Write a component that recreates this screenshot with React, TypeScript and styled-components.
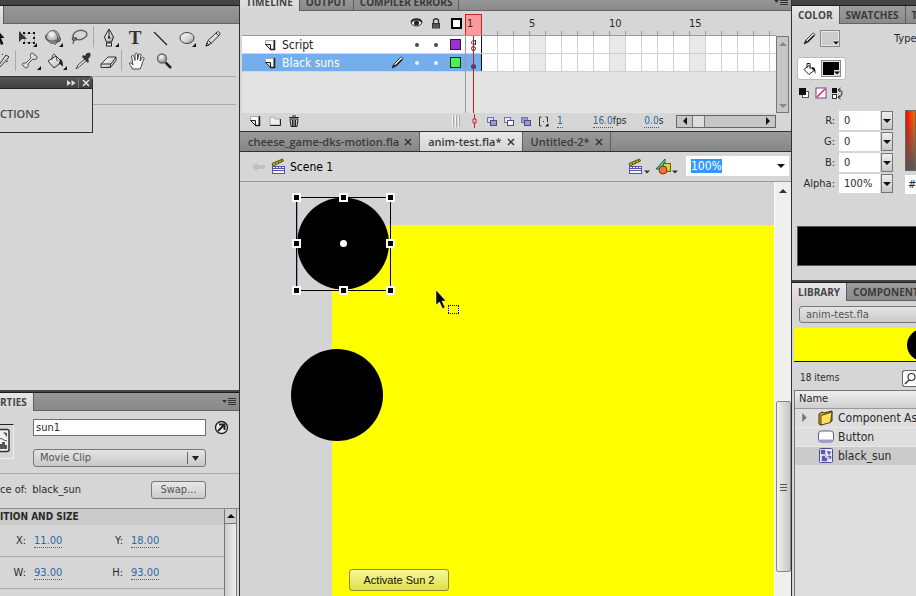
import React, { useEffect, useRef } from "react";
import styled, { createGlobalStyle, css } from "styled-components";

const tabFont = `"Open Sans", "Noto Sans", sans-serif`;
const uiFont = `"DejaVu Sans Condensed", "Noto Sans", sans-serif`;
const face = "#d6d6d6";
const dark = "#303030";

const GlobalStyle = createGlobalStyle`
  *, *::before, *::after { box-sizing: border-box; }
  html, body { margin: 0; height: 100%; overflow: hidden; background: ${face}; }
  body { font: 11px/16px ${uiFont}; color: #2a2a2a; }
  button, input, select { font: inherit; color: inherit; margin: 0; padding: 0; border: 0; border-radius: 0; background: none; outline: none; }
  button { display: inline-flex; align-items: center; justify-content: center; flex: none; }
  svg { display: block; flex: none; }
`;

/* ---------- shell ---------- */

const Shell = styled.div`
  display: grid;
  grid-template-columns: 240px minmax(0, 1fr) 125px;
  height: 100vh;
  overflow: hidden;
  background: ${face};
`;

const LeftDock = styled.aside`
  display: flex;
  flex-direction: column;
  min-height: 0;
  overflow: hidden;
  border-right: 1px solid ${dark};
`;

const Center = styled.main`
  display: flex;
  flex-direction: column;
  min-width: 0;
  min-height: 0;
`;

const RightDock = styled.aside`
  display: flex;
  flex-direction: column;
  min-width: 0;
  min-height: 0;
  overflow: hidden;
  border-left: 1px solid ${dark};
`;

const TitleBar = styled.div<{ $thin?: boolean }>`
  flex: none;
  height: ${(p) => (p.$thin ? 3 : 6)}px;
  background: #444;
  border-bottom: 1px solid #1c1c1c;
`;

const TabStrip = styled.div<{ $short?: boolean }>`
  display: flex;
  flex: none;
  align-items: flex-end;
  height: ${(p) => (p.$short ? 11 : 18)}px;
  overflow: hidden;
  background: linear-gradient(#979797, #888);
  box-shadow: inset 0 -1px #636363;
`;

const PanelTab = styled.button<{ $active?: boolean; $flush?: boolean }>`
  height: 18px;
  padding: 0 6px;
  ${(p) => p.$flush && css`padding: 0 6px 0 0;`}
  font: 700 10px/18px ${tabFont};
  white-space: nowrap;
  color: ${(p) => (p.$active ? "#444" : "#3a3a3a")};
  background: ${(p) => (p.$active ? `linear-gradient(#e6e6e6, ${face})` : "linear-gradient(#9c9c9c, #8a8a8a)")};
  border-right: 1px solid #5c5c5c;
  border-bottom: ${(p) => (p.$active ? "0" : "1px solid #636363")};
`;

const TabEdge = styled.button`
  width: 4px;
  height: 18px;
  background: linear-gradient(#e6e6e6, ${face});
  border-right: 1px solid #5c5c5c;
`;

const StripMenu = styled.button`
  margin-left: auto;
  width: 20px;
  height: 18px;
`;

/* ---------- tools ---------- */

const ToolsArea = styled.section`
  position: relative;
  flex: 1 1 0;
  min-height: 0;
  padding-top: 2px;
  overflow: hidden;
`;

const ToolRow = styled.div`
  display: flex;
  height: 24px;
  margin-left: -11px;
`;

const ToolButton = styled.button`
  width: 26px;
  height: 24px;
`;

const ToolRule = styled.span<{ $w?: number }>`
  width: ${(p) => p.$w ?? 3}px;
  height: 21px;
  border-left: 1px solid #aaa;
`;

const Rule = styled.div<{ $gap: number }>`
  height: 1px;
  margin: ${(p) => p.$gap}px 3px 0 0;
  background: #a9a9a9;
`;

const FloatPanel = styled.section`
  position: absolute;
  left: 0;
  top: 52px;
  width: 93px;
  height: 57px;
  background: ${face};
  border: 1px solid ${dark};
  border-left: 0;
  border-top-right-radius: 4px;
`;

const FloatHeader = styled.div`
  display: flex;
  align-items: center;
  justify-content: flex-end;
  height: 12px;
  background: linear-gradient(#575757, #404040);
  border-bottom: 1px solid #222;
  border-top-right-radius: 3px;
`;

const FloatAction = styled.button`
  width: 14px;
  height: 10px;
  & + & { border-left: 1px solid #777; }
`;

const Grip = styled.div`
  height: 4px;
  margin: 4px 4px 0 0;
  background: radial-gradient(circle, #888 40%, transparent 50%) 0 0 / 2px 2px;
`;

const FloatTitle = styled.h2`
  margin: 7px 0 0;
  font: 600 11px/20px ${tabFont};
  color: #4a4a4a;
`;

/* ---------- properties ---------- */

const Properties = styled.section`
  flex: none;
  height: 206px;
  overflow: hidden;
  display: flex;
  flex-direction: column;
`;

const Identity = styled.div`
  display: grid;
  grid-template-columns: 33px 173px 30px;
  grid-template-rows: 17px 18px;
  row-gap: 13px;
  padding: 8px 3px 6px 0;
  border-bottom: 1px solid #aaa;
`;

const SymbolThumb = styled.div`
  grid-row: 1 / 3;
  margin-top: 5px;
  width: 14px;
  height: 35px;
  border-top: 1px solid #222;
  border-right: 1px solid #eee;
  border-bottom: 1px solid #eee;
`;

const NameInput = styled.input`
  width: 100%;
  height: 17px;
  padding: 0 2px;
  background: #fff;
  border: 1px solid #6e6e6e;
`;

const SelectWrap = styled.div`
  position: relative;
  grid-column: 2;
  height: 18px;
  select {
    appearance: none;
    width: 100%;
    height: 100%;
    padding: 0 6px;
    color: #555;
    background: linear-gradient(#e4e4e4, #c8c8c8);
    border: 1px solid #777;
    border-radius: 3px;
  }
  svg { position: absolute; right: 4px; top: 3px; pointer-events: none; }
`;

const InstanceRow = styled.div`
  display: flex;
  align-items: center;
  gap: 5px;
  height: 34px;
  padding: 0 33px 2px 0;
`;

const SwapButton = styled.button`
  margin-left: auto;
  width: 55px;
  height: 18px;
  color: #555;
  background: linear-gradient(#e8e8e8, #cbcbcb);
  border: 1px solid #777;
  border-radius: 3px;
`;

const PropsBody = styled.div`
  display: grid;
  grid-template-columns: minmax(0, 1fr) 13px;
  flex: 1;
  min-height: 0;
  padding-right: 2px;
  border-top: 1px solid #8a8a8a;
`;

const SectionTitle = styled.h3`
  margin: 0;
  height: 16px;
  font: 700 10px/16px "DejaVu Sans Condensed", sans-serif;
  color: #2a2a2a;
  background: #cbcbcb;
`;

const PairRow = styled.div`
  display: grid;
  grid-template-columns: 26px 56px 25px 1fr;
  column-gap: 8px;
  align-items: center;
  height: 32px;
  border-bottom: 1px solid #aaa;
`;

const FieldLabel = styled.span`
  text-align: right;
  white-space: nowrap;
`;

const HotText = styled.button`
  justify-self: start;
  height: 14px;
  line-height: 13px;
  color: #2a68a5;
  border-bottom: 1px dotted #2a68a5;
`;

const PropsScroll = styled.div`
  border: solid #777;
  border-width: 0 1px;
  background: linear-gradient(90deg, #ccc, #efefef);
  button {
    width: 11px;
    height: 15px;
    border-bottom: 1px solid #777;
    background: #cfcfcf;
  }
`;

/* ---------- timeline ---------- */

const Timeline = styled.section`
  display: grid;
  grid-template-columns: 223px minmax(0, 1fr) 13px;
  grid-template-rows: 25px 77px 14px;
  flex: none;
  padding: 0 2px 4px;
`;

const ToggleHead = styled.div`
  display: flex;
  align-items: center;
  justify-content: flex-end;
  gap: 2px;
  border-bottom: 1px solid #999;
`;

const IconCell = styled.button<{ $w?: number; $push?: boolean }>`
  width: ${(p) => p.$w ?? 18}px;
  height: 16px;
  ${(p) => p.$push && css`margin-left: auto;`}
  svg + svg { align-self: flex-end; }
`;

const Ruler = styled.div`
  position: relative;
  display: flex;
  overflow: hidden;
  border-bottom: 1px solid #999;
`;

const RulerMark = styled.span`
  flex: none;
  width: 16px;
  line-height: 25px;
  white-space: nowrap;
  background: linear-gradient(#999, #999) 0 100% / 1px 4px no-repeat;
`;

const PlayheadBox = styled.div`
  position: absolute;
  left: 0;
  top: 3px;
  width: 17px;
  height: 22px;
  padding-left: 1px;
  line-height: 18px;
  background: #ff9a9a;
  border: 1px solid #c22;
`;

const LayerList = styled.div`
  grid-column: 1;
  background: #e4e4e4;
  min-width: 0;
`;

const LayerRow = styled.div<{ $selected?: boolean }>`
  display: grid;
  grid-template-columns: 34px minmax(0, 1fr) 20px 19px 19px 20px;
  align-items: center;
  height: 18px;
  color: ${(p) => (p.$selected ? "#fff" : "#1c1c1c")};
  background: ${(p) => (p.$selected ? "#74aeec" : "#fff")};
  border-bottom: 1px solid #d5d5d5;
  > * { justify-self: center; }
  > svg:first-child { justify-self: end; }
`;

const LayerName = styled.span`
  && { justify-self: start; }
  font-size: 12px;
  line-height: 16px;
  padding-left: 6px;
`;

const Dot = styled.button`
  width: 4px;
  height: 4px;
  border-radius: 2px;
  background: currentColor;
  opacity: 0.8;
`;

const OutlineChip = styled.button<{ $color: string }>`
  width: 11px;
  height: 11px;
  background: ${(p) => p.$color};
  border: 1px solid #222;
`;

const FrameArea = styled.div`
  position: relative;
  min-width: 0;
  overflow: hidden;
  background: #e4e4e4;
  border-left: 1px solid #999;
`;

const FrameRow = styled.div`
  display: flex;
  height: 18px;
  border-bottom: 1px solid #d0d0d0;
`;

const Frame = styled.button<{ $fifth?: boolean; $first?: boolean; $selected?: boolean }>`
  width: 16px;
  height: 17px;
  background: ${(p) => (p.$selected ? "#74aeec" : p.$fifth ? "#e9e9e9" : "#fff")};
  border-right: 1px solid ${(p) => (p.$first ? "#111" : "#d0d0d0")};
`;

const PlayheadLine = styled.div`
  position: absolute;
  left: 7px;
  top: 0;
  bottom: 0;
  width: 1px;
  background: #d01818;
`;

const VScroll = styled.div`
  display: flex;
  flex-direction: column;
  justify-content: space-between;
  background: #c6c6c6;
  border: 1px solid #777;
  button { width: 11px; height: 13px; }
`;

const TimelineFoot = styled.div`
  grid-column: 1 / -1;
  display: grid;
  grid-template-columns: 223px minmax(0, 1fr) 100px 13px;
  align-items: center;
`;

const FootGroup = styled.div`
  display: flex;
  align-items: center;
  min-width: 0;
`;

const FootStat = styled.span<{ $gap: number }>`
  margin-left: ${(p) => p.$gap}px;
  white-space: nowrap;
  font-size: 10px;
`;

const HScroll = styled.div`
  display: grid;
  grid-template-columns: 15px 13px 1fr 15px;
  height: 13px;
  background: #c6c6c6;
  border: 1px solid #666;
  button { height: 11px; }
`;

const Thumb = styled.span`
  background: #ddd;
  border: solid #777;
  border-width: 0 1px;
`;

/* ---------- documents ---------- */

const DocTabs = styled.nav`
  display: flex;
  flex: none;
  height: 21px;
  background: linear-gradient(#9a9a9a, #868686);
  border-top: 1px solid ${dark};
  border-bottom: 1px solid ${dark};
`;

const DocTab = styled.div<{ $active?: boolean }>`
  display: flex;
  align-items: center;
  gap: 5px;
  padding: 0 7px 0 8px;
  font: 600 11px/19px ${tabFont};
  white-space: nowrap;
  color: #3a3a3a;
  background: ${(p) => (p.$active ? `linear-gradient(#e8e8e8, ${face})` : "transparent")};
  border-right: 1px solid #606060;
`;

const CloseButton = styled.button`
  width: 8px;
  height: 10px;
`;

const SceneBar = styled.div`
  display: flex;
  align-items: center;
  flex: none;
  height: 30px;
  padding: 0 2px 0 5px;
  border-bottom: 1px solid #999;
`;

const SceneName = styled.span`
  margin: 0 auto 0 3px;
  font-size: 12px;
  color: #000;
`;

const ZoomBox = styled.div`
  display: flex;
  align-items: center;
  width: 103px;
  height: 20px;
  margin: 0 0 2px 4px;
  padding: 0 4px 0 5px;
  background: #fff;
  input { width: 80px; height: 14px; line-height: 14px; font-size: 12px; }
  input::selection { color: #fff; background: #3399ff; }
  button { margin-left: auto; }
`;

const Workspace = styled.div`
  display: grid;
  grid-template-columns: minmax(0, 1fr) 17px;
  flex: 1;
  min-height: 0;
`;

const Canvas = styled.div`
  position: relative;
  overflow: hidden;
  background: #d4d4d4;
`;

const StageArea = styled.div`
  position: absolute;
  left: 92px;
  top: 43px;
  right: 0;
  bottom: 0;
  background: #ffff00;
`;

const CanvasItem = styled.div<{ $x: number; $y: number }>`
  position: absolute;
  left: ${(p) => p.$x}px;
  top: ${(p) => p.$y}px;
`;

const StageButton = styled.button`
  width: 100px;
  height: 22px;
  font: 11px/20px "Liberation Sans", Arial, sans-serif;
  color: #111;
  background: linear-gradient(#f8f89a, #dede4c);
  border: 1px solid #8c8c30;
  border-radius: 3px;
`;

const StageScroll = styled.div`
  display: flex;
  flex-direction: column;
  align-items: center;
  background: #efefef;
  border-left: 1px solid #fafafa;
  > button:first-child { height: 17px; width: 15px; }
`;

const StageThumb = styled.button`
  width: 15px;
  height: 171px;
  margin-top: 202px;
  background: linear-gradient(90deg, #f0f0f0, #c6c6c6);
  border: 1px solid #888;
  border-radius: 2px;
`;

/* ---------- colour ---------- */

const ColorPanel = styled.section`
  flex: none;
  height: 256px;
  padding-left: 5px;
  overflow: hidden;
`;

const SwatchRow = styled.div<{ $lit?: boolean }>`
  display: flex;
  align-items: center;
  gap: 4px;
  width: 49px;
  height: 23px;
  padding-left: 5px;
  background: ${(p) => (p.$lit ? "#fff" : "transparent")};
  border: ${(p) => (p.$lit ? "1px solid #bbb" : "1px solid transparent")};
  border-radius: 3px;
`;

const SwatchLine = styled.div<{ $top: number }>`
  display: flex;
  align-items: center;
  justify-content: space-between;
  margin-top: ${(p) => p.$top}px;
  white-space: nowrap;
  overflow: hidden;
`;

const TypeLabel = styled.span`
  flex: none;
  width: 22px;
  overflow: hidden;
`;

const Swatch = styled.button<{ $color: string }>`
  position: relative;
  width: 20px;
  height: 17px;
  background: ${(p) => p.$color};
  border: 2px solid #e8e8e8;
  outline: 1px solid #888;
  outline-offset: -1px;
  svg { position: absolute; right: -1px; bottom: -1px; background: #ddd; }
`;

const MiniRow = styled.div`
  display: flex;
  gap: 4px;
  height: 14px;
  margin: 6px 0 0 1px;
`;

const MixerRow = styled.div`
  display: flex;
  gap: 12px;
  margin-top: 10px;
`;

const ChannelList = styled.div`
  display: flex;
  flex-direction: column;
  width: 96px;
`;

const Channel = styled.label`
  display: grid;
  grid-template-columns: 38px 41px 12px;
  align-items: center;
  height: 21px;
  column-gap: 4px;
  > span { text-align: right; white-space: nowrap; }
  > input { width: 41px; height: 19px; padding: 0 5px; background: #fff; }
  > button { width: 12px; height: 19px; margin-left: -3px; border: 1px solid #777; background: linear-gradient(#eee, #c8c8c8); }
`;

const HueColumn = styled.div`
  display: flex;
  flex-direction: column;
  gap: 4px;
  flex: 1;
  min-width: 0;
`;

const Spectrum = styled.div`
  height: 61px;
  border: 1px solid #666;
  background: linear-gradient(transparent, #555), linear-gradient(90deg, #f00, #ff0 20px);
`;

const HexField = styled.input`
  width: 100%;
  height: 19px;
  padding-left: 3px;
  && { background: #fff; }
`;

const ColorPreview = styled.div`
  height: 40px;
  margin-top: 32px;
  background: #000;
  border: 1px solid #555;
  border-right: 0;
`;

/* ---------- library ---------- */

const Library = styled.section`
  display: flex;
  flex-direction: column;
  flex: 1;
  min-height: 0;
  padding-left: 2px;
`;

const LibraryFile = styled.div`
  padding: 5px 0 5px 5px;
  overflow: hidden;
  select {
    appearance: none;
    display: block;
    width: 150px;
    height: 17px;
    padding: 0 6px;
    color: #555;
    background: linear-gradient(#e4e4e4, #cacaca);
    border: 1px solid #777;
    border-radius: 3px;
  }
`;

const LibraryPreview = styled.div`
  display: flex;
  justify-content: flex-end;
  height: 34px;
  overflow: hidden;
  background: #ffff00;
  border-bottom: 1px solid #111;
`;

const LibraryTools = styled.div`
  display: flex;
  align-items: center;
  justify-content: space-between;
  height: 28px;
  padding: 4px 0 0 6px;
  font-size: 10px;
`;

const SearchButton = styled.button`
  width: 14px;
  height: 17px;
  background: #fff;
  border: 1px solid #666;
  border-right: 0;
  border-radius: 3px 0 0 3px;
`;

const Items = styled.div`
  flex: 1;
  min-height: 0;
  overflow: hidden;
  background: #dedede;
  border-top: 1px solid #777;
  border-left: 1px solid #777;
`;

const ItemTable = styled.table`
  width: 100%;
  border-collapse: collapse;
  table-layout: fixed;
  th { height: 17px; padding: 0 4px; font: inherit; text-align: left; background: linear-gradient(#efefef, #cfcfcf); border-bottom: 1px solid #999; }
  td { height: 18px; padding: 0; }
`;

const ItemRow = styled.tr<{ $selected?: boolean }>`
  background: ${(p) => (p.$selected ? "#cbcbcb" : "#dedede")};
  border-top: 1px solid #e8e8e8;
`;

const ItemCell = styled.div`
  display: grid;
  grid-template-columns: 18px 19px minmax(0, 1fr);
  column-gap: 3px;
  align-items: center;
  height: 18px;
  white-space: nowrap;
  overflow: hidden;
  font-size: 12px;
  > svg { justify-self: center; }
`;

/* ---------- icons ---------- */

const Corner = ({ x, y }: { x: number; y: number }) => <path d={`M${x + 4} ${y}v4h-4z`} fill="#111" />;

const SharedPaints = () => (
  <svg width="0" height="0" style={{ position: "absolute" }} aria-hidden>
    <defs>
      <linearGradient id="metal" x1="0" y1="0" x2="1" y2="1">
        <stop offset="0" stopColor="#fff" />
        <stop offset="0.6" stopColor="#d4d4d4" />
        <stop offset="1" stopColor="#888" />
      </linearGradient>
      <radialGradient id="ball" cx="0.4" cy="0.3" r="0.8">
        <stop offset="0" stopColor="#fff" />
        <stop offset="1" stopColor="#777" />
      </radialGradient>
    </defs>
  </svg>
);

const ToolSvg = ({ children }: { children: React.ReactNode }) => (
  <svg width="26" height="24" viewBox="0 0 26 24" fill="none" aria-hidden>
    {children}
  </svg>
);

const toolArt: Record<string, React.ReactNode> = {
  Selection: <path d="M7 2l8.500 10h-3.500l2.500 6-2.500 1-2.500-6-2.500 3z" fill="#111" />,
  "Free Transform": (
    <>
      <rect x="9.500" y="7.500" width="10" height="9" stroke="#777" strokeDasharray="1 1" />
      {[8, 13, 18].flatMap((x) => [6, 11, 16].map((y) => (x === 13 && y === 11 ? null : <rect key={`${x}-${y}`} x={x} y={y} width="2" height="2" fill="#111" />)))}
      <path d="M4 5v11l3-3h5z" fill="#333" />
      <Corner x={18} y={17} />
    </>
  ),
  "3D Rotation": (
    <>
      <ellipse cx="12" cy="12" rx="7.500" ry="4" stroke="#444" strokeWidth="1.200" transform="rotate(12 12 12)" />
      <circle cx="12" cy="11" r="6.500" fill="url(#ball)" stroke="#666" />
      <path d="M5 13c4 3 10 3 14-1M13 5c4 3 5 9 1 14" stroke="#555" />
      <Corner x={18} y={17} />
    </>
  ),
  Lasso: (
    <>
      <ellipse cx="13" cy="9" rx="7" ry="4.500" stroke="#666" strokeWidth="1.500" transform="rotate(-12 13 9)" />
      <path d="M6 11c-2 3 1 4 3 3s-1-4-2-1c-1 2 0 3-1 5" stroke="#555" strokeWidth="1.200" />
    </>
  ),
  Pen: (
    <>
      <path d="M13 3l-4.500 8 2 5h5l2-5z" fill="url(#metal)" stroke="#222" />
      <path d="M13 4v7" stroke="#222" />
      <circle cx="13" cy="11.500" r="1.200" fill="#222" />
      <rect x="10.500" y="17" width="5" height="3" fill="#eee" stroke="#222" />
      <Corner x={19} y={17} />
    </>
  ),
  Text: (
    <text x="13" y="18" textAnchor="middle" fontFamily="Liberation Serif" fontSize="19" fontWeight="700" fill="#333">
      T
    </text>
  ),
  Line: <path d="M6 6l13 13" stroke="#222" strokeWidth="1.300" />,
  Oval: (
    <>
      <ellipse cx="13" cy="12" rx="7" ry="5.500" fill="url(#metal)" stroke="#444" />
      <Corner x={18} y={17} />
    </>
  ),
  Pencil: (
    <>
      <path d="M6 20l2-5.500L17 6c1.500-1 4 1 2.500 3L11 17.500z" fill="url(#metal)" stroke="#333" />
      <path d="M8.500 14.500l3 3M16 7l3 3M6 20l1-3 2 2z" stroke="#222" />
    </>
  ),
  Deco: <path d="M10 15l7-10 3 2-8 9-3 2zM13 5l1-1M17 12l2-1" fill="url(#metal)" stroke="#333" />,
  Bone: (
    <>
      <path d="M9 13l5-5c-1-2-1-5 1-5 2 0 2 1 2 2 2 0 3 1 3 3s-3 2-4 1l-5 5c1 2 0 4-2 4-1 0-2-1-2-2-2 0-2-2-1-3z" fill="url(#metal)" stroke="#555" />
      <Corner x={20} y={16} />
    </>
  ),
  "Paint Bucket": (
    <>
      <path d="M5 11l8-5 6 6-8 6z" fill="url(#metal)" stroke="#333" />
      <path d="M9 10c0-8 4-8 5 1" stroke="#444" />
      <path d="M17 9c3 1 3 5 3 8-1-1-2-3-4-3z" fill="#222" />
      <Corner x={20} y={16} />
    </>
  ),
  Eyedropper: (
    <>
      <path d="M7 19l2-4 7-6 1.500 1.500-7 6z" fill="#eee" stroke="#444" />
      <path d="M13 7l6 6 1-2-1-2c3-2 3-5 2-6-2-1-4 0-5 3l-2-1z" fill="#333" />
    </>
  ),
  Eraser: <path d="M6 14l7-7h8l-5 7zM6 14v3.500h9.500V14m0 3.500l5.500-7V7" fill="url(#metal)" stroke="#333" />,
  Hand: (
    <path
      d="M8.500 19c-1-3-3-4-3-6 1-1 2 0 3.500 2L7.500 6c1-1 2-.5 2.500.500l1 4V4c1-1 2-1 2.500 0v6l1.500-6c1-.5 2 0 2 1l-1 6 2.500-3.500c1-.5 2 .5 1.500 1.500-2 3-2 7-4 10z"
      fill="#fff"
      stroke="#444"
    />
  ),
  Zoom: (
    <>
      <circle cx="12" cy="8.500" r="4.500" fill="url(#ball)" stroke="#666" strokeWidth="1.300" />
      <path d="M15.500 12.500l5.500 5.500" stroke="#222" strokeWidth="2.500" />
    </>
  ),
};

const Tool = ({ name }: { name: string }) => (
  <ToolButton aria-label={name}>
    <ToolSvg>{toolArt[name]}</ToolSvg>
  </ToolButton>
);

const Tri = ({ dir, color = "#111", size = 8 }: { dir: "up" | "down" | "left" | "right"; color?: string; size?: number }) => {
  const d = { up: "M0 6l4-4 4 4z", down: "M0 2h8l-4 4z", left: "M6 0v8l-4-4z", right: "M2 0v8l4-4z" }[dir];
  return (
    <svg width={size} height={size} viewBox="0 0 8 8" aria-hidden>
      <path d={d} fill={color} />
    </svg>
  );
};

const MenuGlyph = () => (
  <svg width="14" height="10" viewBox="0 0 14 10" aria-hidden>
    <path d="M0 3h5l-2.500 3z" fill="#333" />
    <path d="M6 1.500h8M6 3.500h8M6 5.500h8M6 7.500h8" stroke="#333" />
  </svg>
);

const Cross = ({ color = "#333" }: { color?: string }) => (
  <svg width="8" height="8" viewBox="0 0 8 8" aria-hidden>
    <path d="M1 1l6 6M7 1L1 7" stroke={color} strokeWidth="1.400" />
  </svg>
);

const PageGlyph = () => (
  <svg width="11" height="12" viewBox="0 0 11 12" aria-hidden>
    <path d="M0.500 1.500h8v9h-3l-5-5z" fill="#f8f8f8" stroke="#aaa" />
    <path d="M9.500 1v9.500H5" fill="none" stroke="#222" strokeWidth="1.500" />
    <path d="M0.500 5.500h5v5z" fill="#ddd" stroke="#222" />
  </svg>
);

const FolderGlyph = () => (
  <svg width="13" height="12" viewBox="0 0 13 12" aria-hidden>
    <path d="M1 10V3l1-1h3l1 2h5v6z" fill="#eee" stroke="#aaa" />
    <path d="M1 10.500h10.500V4" fill="none" stroke="#222" />
  </svg>
);

const TrashGlyph = () => (
  <svg width="12" height="12" viewBox="0 0 12 12" aria-hidden>
    <path d="M2 4h8l-1 7.500H3z" fill="#ccc" stroke="#222" />
    <path d="M1 2.500h10M4 1h4M4.500 5v6M6 5v6M7.500 5v6" stroke="#222" />
  </svg>
);

const EyeGlyph = () => (
  <svg width="13" height="10" viewBox="0 0 13 10" aria-hidden>
    <path d="M1 5c2-4 9-4 11 0-2 4-9 4-11 0z" fill="#eee" stroke="#333" />
    <path d="M1 4c2-4 9-4 11 0" stroke="#222" strokeWidth="1.500" fill="none" />
    <circle cx="6.500" cy="5" r="2.500" fill="#222" />
  </svg>
);

const LockGlyph = () => (
  <svg width="10" height="11" viewBox="0 0 10 11" aria-hidden>
    <path d="M2.500 5V3c0-3 5-3 5 0v2" fill="none" stroke="#333" strokeWidth="1.400" />
    <rect x="1" y="5" width="8" height="5.500" fill="#333" />
    <path d="M2 7h6M2 9h6" stroke="#777" />
  </svg>
);

const PencilGlyph = () => (
  <svg width="13" height="13" viewBox="0 0 13 13" aria-hidden>
    <path d="M1 12l2-4 6.500-6.500c1-1 3 .5 2 2L5 10z" fill="#eee" stroke="#333" />
    <path d="M1 12l2-4 1.500 2z" fill="#222" />
    <path d="M4.500 10L11 3.500" stroke="#111" strokeWidth="1.500" />
  </svg>
);

const OnionGlyph = ({ back, front }: { back: string; front: string }) => (
  <svg width="12" height="11" viewBox="0 0 12 11" aria-hidden>
    <rect x="1.500" y="1.500" width="6" height="5" fill={back} stroke="#7272b0" />
    <rect x="4.500" y="4.500" width="6" height="5" fill={front} stroke="#4b4b8c" />
  </svg>
);

const ClapperGlyph = () => (
  <svg width="16" height="17" viewBox="0 0 16 17" aria-hidden>
    <path d="M1 5.500L11.500 1l1 2L2 8z" fill="#b8b820" stroke="#55550c" />
    <path d="M4 4.500l1 2M7 3l1 2M10 2l1 2" stroke="#55550c" />
    <rect x="1.500" y="8.500" width="12" height="7" fill="#f3f3ff" stroke="#5555a5" />
    <path d="M2 10.500h11.500M5 8.500l-1 2M8 8.500l-1 2M11 8.500l-1 2M2 12.500h11" stroke="#5555a5" />
  </svg>
);

const ShapesGlyph = () => (
  <svg width="17" height="17" viewBox="0 0 17 17" aria-hidden>
    <path d="M1 11l9-10v10z" fill="#4ecb9c" stroke="#146650" />
    <rect x="8.500" y="5.500" width="7" height="8" fill="#d6d630" stroke="#66600c" />
    <circle cx="8" cy="12" r="4" fill="#f27541" stroke="#8e2b10" />
  </svg>
);

const BucketGlyph = () => (
  <svg width="14" height="14" viewBox="0 0 14 14" aria-hidden>
    <path d="M1 7.500l5-4 5 5-5 4z" fill="#fff" stroke="#222" />
    <path d="M4 6V1.500h3V7" fill="none" stroke="#222" />
    <path d="M9 5c4 0 3.500 4 3.500 7C11 10 12 8 9 7z" fill="#222" />
  </svg>
);

const SelectedSun = () => {
  const columns = [4, 51, 98];
  const rows = [4, 50, 97];
  return (
    <svg width="103" height="102" viewBox="0 0 103 102" aria-hidden>
      <circle cx="51" cy="50.500" r="46" fill="#000" />
      <path d="M4.500 4.500h94v93h-94z" fill="none" stroke="#000" />
      <path d="M5.500 9v84" stroke="#3399cc" strokeOpacity="0.700" />
      {columns.flatMap((x) =>
        rows.map((y) =>
          x === 51 && y === 50 ? (
            <circle key="pivot" cx="51.500" cy="50.500" r="3.500" fill="#fff" />
          ) : (
            <g key={`${x}-${y}`}>
              <rect x={x - 4} y={y - 4} width="9" height="9" fill="#fff" />
              <rect x={x - 2} y={y - 2} width="5" height="5" fill="#000" />
            </g>
          ),
        ),
      )}
    </svg>
  );
};

/* ---------- data ---------- */

const rowOne = ["Selection", "Free Transform", "3D Rotation", "Lasso", "|", "Pen", "Text", "Line", "Oval", "Pencil"];
const rowTwo = ["Deco", "||", "Bone", "Paint Bucket", "Eyedropper", "Eraser", "|", "Hand", "Zoom"];
const layers = [
  { name: "Script", color: "#9b30d0", selected: false },
  { name: "Black suns", color: "#4ef04e", selected: true },
];
const frames = Array.from({ length: 60 }, (_, i) => i + 1);
const labelledFrames = [5, 10, 15];
const channels = [
  ["R:", "0"],
  ["G:", "0"],
  ["B:", "0"],
  ["Alpha:", "100%"],
];

const Tools = ({ names }: { names: string[] }) => (
  <ToolRow>{names.map((n) => (n[0] === "|" ? <ToolRule key={n} $w={n === "||" ? 2 : 3} /> : <Tool key={n} name={n} />))}</ToolRow>
);

const DocumentTab = ({ name, active }: { name: string; active?: boolean }) => (
  <DocTab $active={active}>
    <span>{name}</span>
    <CloseButton aria-label={`Close ${name}`}>
      <Cross />
    </CloseButton>
  </DocTab>
);

const Pair = ({ items }: { items: [string, string][] }) => (
  <PairRow>
    {items.map(([label, value]) => (
      <React.Fragment key={label}>
        <FieldLabel>{label}</FieldLabel>
        <HotText aria-label={`${label} ${value}`}>{value}</HotText>
      </React.Fragment>
    ))}
  </PairRow>
);

export default function App() {
  const zoomRef = useRef<HTMLInputElement>(null);
  useEffect(() => {
    zoomRef.current?.focus();
    zoomRef.current?.select();
  }, []);

  return (
    <>
      <GlobalStyle />
      <SharedPaints />
      <Shell>
        <LeftDock>
          <TitleBar />
          <TabStrip>
            <TabEdge aria-label="Tools" />
          </TabStrip>
          <ToolsArea>
            <Tools names={rowOne} />
            <Tools names={rowTwo} />
            <Rule $gap={2} />
            <Rule $gap={27} />
            <FloatPanel>
              <FloatHeader>
                <FloatAction aria-label="Collapse">
                  <svg width="9" height="6" viewBox="0 0 9 6" aria-hidden>
                    <path d="M0 0l4 3-4 3zM4.500 0l4 3-4 3z" fill="#ddd" />
                  </svg>
                </FloatAction>
                <FloatAction aria-label="Close panel">
                  <Cross color="#eee" />
                </FloatAction>
              </FloatHeader>
              <Grip />
              <FloatTitle>CTIONS</FloatTitle>
            </FloatPanel>
          </ToolsArea>
          <Properties>
            <TitleBar $thin />
            <TabStrip>
              <PanelTab $active $flush>
                RTIES
              </PanelTab>
              <StripMenu aria-label="Panel menu">
                <MenuGlyph />
              </StripMenu>
            </TabStrip>
            <Identity>
              <SymbolThumb>
                <svg width="12" height="32" viewBox="0 0 12 32" aria-hidden>
                  <path d="M0 4.500h7q2 0 2 2v18q0 2-2 2H0" fill="#f2f2f2" stroke="#333" strokeWidth="1.500" />
                  <path d="M3 7l4 1v4zM0 24v-5h2v-2h3v3h2v4zM0 13c3 0 4 3 7 2v1c-3 1-4-2-7-2z" fill="#555" />
                </svg>
              </SymbolThumb>
              <NameInput aria-label="Instance name" defaultValue="sun1" />
              <svg width="30" height="17" viewBox="0 0 30 17" aria-hidden>
                <circle cx="15.500" cy="8.500" r="6" fill="#eee" stroke="#222" strokeWidth="1.400" />
                <path d="M13 5.500h5.500V11M18 6l-6 6" fill="none" stroke="#222" strokeWidth="2" />
              </svg>
              <SelectWrap>
                <select aria-label="Symbol behavior">
                  <option>Movie Clip</option>
                </select>
                <svg width="16" height="12" viewBox="0 0 16 12" aria-hidden>
                  <path d="M1.500 0v12" stroke="#666" />
                  <path d="M6 4h7l-3.500 5z" fill="#222" />
                </svg>
              </SelectWrap>
            </Identity>
            <InstanceRow>
              <span>ce of:</span>
              <span>black_sun</span>
              <SwapButton>Swap...</SwapButton>
            </InstanceRow>
            <PropsBody>
              <div>
                <SectionTitle>ITION AND SIZE</SectionTitle>
                <Pair items={[["X:", "11.00"], ["Y:", "18.00"]]} />
                <Pair items={[["W:", "93.00"], ["H:", "93.00"]]} />
              </div>
              <PropsScroll>
                <button aria-label="Scroll up">
                  <Tri dir="up" />
                </button>
              </PropsScroll>
            </PropsBody>
          </Properties>
        </LeftDock>

        <Center>
          <TabStrip $short>
            <PanelTab $active>TIMELINE</PanelTab>
            <PanelTab>OUTPUT</PanelTab>
            <PanelTab>COMPILER ERRORS</PanelTab>
            <StripMenu aria-label="Timeline menu">
              <MenuGlyph />
            </StripMenu>
          </TabStrip>
          <Timeline>
            <ToggleHead>
              <IconCell aria-label="Show or hide all layers">
                <EyeGlyph />
              </IconCell>
              <IconCell aria-label="Lock all layers">
                <LockGlyph />
              </IconCell>
              <IconCell aria-label="Show all layers as outlines">
                <svg width="11" height="11" viewBox="0 0 11 11" aria-hidden>
                  <rect x="1" y="1" width="9" height="9" fill="#fff" stroke="#000" strokeWidth="2" />
                </svg>
              </IconCell>
            </ToggleHead>
            <Ruler>
              {frames.map((n) => (
                <RulerMark key={n}>{labelledFrames.includes(n) ? n : ""}</RulerMark>
              ))}
              <PlayheadBox>1</PlayheadBox>
            </Ruler>
            <LayerList>
              {layers.map((layer) => (
                <LayerRow key={layer.name} $selected={layer.selected}>
                  <PageGlyph />
                  <LayerName>{layer.name}</LayerName>
                  {layer.selected ? <PencilGlyph /> : <span />}
                  <Dot aria-label={`Toggle visibility of ${layer.name}`} />
                  <Dot aria-label={`Toggle lock of ${layer.name}`} />
                  <OutlineChip $color={layer.color} aria-label={`Outline color of ${layer.name}`} />
                </LayerRow>
              ))}
            </LayerList>
            <FrameArea>
              {layers.map((layer) => (
                <FrameRow key={layer.name}>
                  {frames.map((n) => (
                    <Frame
                      key={n}
                      $first={n === 1}
                      $fifth={labelledFrames.includes(n)}
                      $selected={n === 1 && layer.selected}
                      aria-label={`${layer.name} frame ${n}`}
                    >
                      {n === 1 && (
                        <svg width="15" height="17" viewBox="0 0 15 17" aria-hidden>
                          {layer.selected ? (
                            <circle cx="7.500" cy="12.500" r="2.500" fill="#3c4468" />
                          ) : (
                            <g fill="none" stroke="#333">
                              <circle cx="7.500" cy="12.500" r="2" />
                              <path d="M9.500 4v5M9.500 6a2 2 0 1 0 0 1" />
                            </g>
                          )}
                        </svg>
                      )}
                    </Frame>
                  ))}
                </FrameRow>
              ))}
              <PlayheadLine />
            </FrameArea>
            <VScroll>
              <button aria-label="Scroll layers up">
                <Tri dir="up" color="#888" />
              </button>
              <button aria-label="Scroll layers down">
                <Tri dir="down" color="#888" />
              </button>
            </VScroll>
            <TimelineFoot>
              <FootGroup>
                <IconCell $w={27} aria-label="New layer">
                  <PageGlyph />
                </IconCell>
                <IconCell $w={13} aria-label="New folder">
                  <FolderGlyph />
                </IconCell>
                <IconCell $w={24} aria-label="Delete layer">
                  <TrashGlyph />
                </IconCell>
                <IconCell $w={18} $push aria-label="Center frame">
                  <svg width="8" height="12" viewBox="0 0 8 12" aria-hidden>
                    <path d="M1.500 0v12M4.500 0v12M7.500 0v12" stroke="#aaa" />
                    <path d="M.5 0v12M3.500 0v12M6.500 0v12" stroke="#f4f4f4" />
                  </svg>
                </IconCell>
              </FootGroup>
              <FootGroup>
                <IconCell $w={18} aria-label="Playhead">
                  <svg width="5" height="14" viewBox="0 0 5 14" aria-hidden>
                    <path d="M2.500 0v5M2.500 9v5M1 5h3v4H1z" fill="none" stroke="#c22" />
                  </svg>
                </IconCell>
                <IconCell aria-label="Onion skin">
                  <OnionGlyph back="#dcdcf4" front="#9a9ac8" />
                </IconCell>
                <IconCell $w={16} aria-label="Onion skin outlines">
                  <OnionGlyph back="#eee" front="#fff" />
                </IconCell>
                <IconCell $w={18} aria-label="Edit multiple frames">
                  <OnionGlyph back="#9a9ac8" front="#9a9ac8" />
                </IconCell>
                <IconCell $w={16} aria-label="Modify onion markers">
                  <svg width="11" height="11" viewBox="0 0 11 11" aria-hidden>
                    <path d="M3.500 1h-2v9h2M7.500 1h2v5M5 5.500h1" fill="none" stroke="#333" />
                    <path d="M10.500 7v3.500H7z" fill="#111" />
                  </svg>
                </IconCell>
                <FootStat $gap={6}>
                  <HotText>1</HotText>
                </FootStat>
                <FootStat $gap={30}>
                  <HotText>16.0</HotText>fps
                </FootStat>
                <FootStat $gap={18}>
                  <HotText>0.0</HotText>s
                </FootStat>
              </FootGroup>
              <HScroll>
                <button aria-label="Scroll frames left">
                  <Tri dir="left" />
                </button>
                <Thumb />
                <span />
                <button aria-label="Scroll frames right">
                  <Tri dir="right" />
                </button>
              </HScroll>
            </TimelineFoot>
          </Timeline>

          <DocTabs>
            <DocumentTab name="cheese_game-dks-motion.fla" />
            <DocumentTab name="anim-test.fla*" active />
            <DocumentTab name="Untitled-2*" />
          </DocTabs>
          <SceneBar>
            <IconCell $w={26} aria-label="Back">
              <svg width="13" height="10" viewBox="0 0 13 10" aria-hidden>
                <path d="M0 5l5-5v3h8v4H5v3z" fill="#c0c0c0" />
              </svg>
            </IconCell>
            <ClapperGlyph />
            <SceneName>Scene 1</SceneName>
            <IconCell $w={23} aria-label="Edit scene">
              <ClapperGlyph />
              <Tri dir="down" size={6} color="#333" />
            </IconCell>
            <IconCell $w={32} aria-label="Edit symbols">
              <ShapesGlyph />
              <Tri dir="down" size={6} color="#333" />
            </IconCell>
            <ZoomBox>
              <input ref={zoomRef} aria-label="Zoom" defaultValue="100%" />
              <button aria-label="Zoom levels">
                <Tri dir="down" />
              </button>
            </ZoomBox>
          </SceneBar>
          <Workspace>
            <Canvas>
              <StageArea />
              <CanvasItem $x={52} $y={11}>
                <SelectedSun />
              </CanvasItem>
              <CanvasItem $x={51} $y={167}>
                <svg width="92" height="92" viewBox="0 0 92 92" aria-hidden>
                  <circle cx="46" cy="46" r="46" />
                </svg>
              </CanvasItem>
              <CanvasItem $x={109} $y={387}>
                <StageButton>Activate Sun 2</StageButton>
              </CanvasItem>
              <CanvasItem $x={195} $y={107}>
                <svg width="26" height="26" viewBox="0 0 26 26" aria-hidden>
                  <path d="M1 1v15l3.500-3 3 6.500 2.500-1-3-6.500H11z" fill="#000" stroke="#fff" strokeWidth="0.500" />
                  <path d="M13 16.500h11M13 24.500h11M13.500 17v8M23.500 17v8" stroke="#000" strokeDasharray="1 1" />
                </svg>
              </CanvasItem>
            </Canvas>
            <StageScroll>
              <button aria-label="Scroll stage up">
                <Tri dir="up" color="#333" />
              </button>
              <StageThumb aria-label="Stage scroll position">
                <svg width="7" height="8" viewBox="0 0 7 8" aria-hidden>
                  <path d="M0 1.500h7M0 4.500h7M0 7.500h7" stroke="#555" />
                </svg>
              </StageThumb>
            </StageScroll>
          </Workspace>
        </Center>

        <RightDock>
          <TitleBar />
          <TabStrip>
            <PanelTab $active>COLOR</PanelTab>
            <PanelTab>SWATCHES</PanelTab>
            <PanelTab>TR</PanelTab>
          </TabStrip>
          <ColorPanel>
            <SwatchLine $top={3}>
              <SwatchRow>
                <PencilGlyph />
                <Swatch $color="#ccc" aria-label="Stroke color">
                  <Tri dir="down" size={6} />
                </Swatch>
              </SwatchRow>
              <TypeLabel>Type:</TypeLabel>
            </SwatchLine>
            <SwatchLine $top={7}>
              <SwatchRow $lit>
                <BucketGlyph />
                <Swatch $color="#000" aria-label="Fill color">
                  <Tri dir="down" size={6} />
                </Swatch>
              </SwatchRow>
            </SwatchLine>
            <MiniRow>
              <button aria-label="Black and white">
                <svg width="13" height="13" viewBox="0 0 13 13" aria-hidden>
                  <rect x="4.500" y="4.500" width="6" height="6" fill="#fff" stroke="#555" />
                  <rect x="1" y="1" width="7" height="7" fill="#111" />
                </svg>
              </button>
              <button aria-label="No color">
                <svg width="12" height="12" viewBox="0 0 12 12" aria-hidden>
                  <rect x="1" y="1" width="10" height="10" fill="#fff" stroke="#7a3a80" />
                  <path d="M2 10l8-8" stroke="#e02050" strokeWidth="1.500" />
                </svg>
              </button>
              <button aria-label="Swap colors">
                <svg width="13" height="13" viewBox="0 0 13 13" aria-hidden>
                  <rect x="1" y="1" width="5" height="5" fill="#111" />
                  <rect x="1.500" y="7.500" width="4" height="4" fill="#fff" stroke="#333" />
                  <path d="M8 3c4-1 4 7 0 7M9.500 1L7 3l2.500 2M9.500 8L7 10l2.500 2" fill="none" stroke="#222" />
                </svg>
              </button>
            </MiniRow>
            <MixerRow>
              <ChannelList>
                {channels.map(([label, value]) => (
                  <Channel key={label}>
                    <span>{label}</span>
                    <input defaultValue={value} />
                    <button aria-label={`Adjust ${label}`}>
                      <Tri dir="down" />
                    </button>
                  </Channel>
                ))}
              </ChannelList>
              <HueColumn>
                <Spectrum />
                <HexField aria-label="Hex color" defaultValue="#" />
              </HueColumn>
            </MixerRow>
            <ColorPreview />
          </ColorPanel>
          <TitleBar $thin />
          <TabStrip>
            <PanelTab $active>LIBRARY</PanelTab>
            <PanelTab>COMPONENT</PanelTab>
          </TabStrip>
          <Library>
            <LibraryFile>
              <select aria-label="Library document">
                <option>anim-test.fla</option>
              </select>
            </LibraryFile>
            <LibraryPreview>
              <svg width="9" height="33" viewBox="0 0 9 33" aria-hidden>
                <circle cx="16" cy="17" r="16" />
              </svg>
            </LibraryPreview>
            <LibraryTools>
              <span>18 items</span>
              <SearchButton aria-label="Search library">
                <svg width="12" height="13" viewBox="0 0 12 13" aria-hidden>
                  <circle cx="7.500" cy="5" r="3.500" fill="none" stroke="#333" strokeWidth="1.200" />
                  <path d="M5 8l-4 4" stroke="#333" strokeWidth="1.500" />
                </svg>
              </SearchButton>
            </LibraryTools>
            <Items>
              <ItemTable>
                <thead>
                  <tr>
                    <th scope="col">Name</th>
                  </tr>
                </thead>
                <tbody>
                  <ItemRow>
                    <td>
                      <ItemCell>
                        <Tri dir="right" color="#777" size={9} />
                        <svg width="16" height="16" viewBox="0 0 16 16" aria-hidden>
                          <path d="M1 4l3-2 2 1 8-2v10L3 15l-2-1z" fill="#e8a81c" stroke="#3a2c08" />
                          <path d="M3 5.500l11-3.500-1.500 10.500L3 15z" fill="#ffe05a" stroke="#5a430c" />
                        </svg>
                        <span>Component Ass</span>
                      </ItemCell>
                    </td>
                  </ItemRow>
                  <ItemRow>
                    <td>
                      <ItemCell>
                        <span />
                        <svg width="16" height="13" viewBox="0 0 16 13" aria-hidden>
                          <rect x="0.500" y="1" width="15" height="11" rx="3" fill="#fff" stroke="#5a5aa0" />
                          <path d="M2 10.500h12" stroke="#9a9ad0" strokeWidth="2" />
                        </svg>
                        <span>Button</span>
                      </ItemCell>
                    </td>
                  </ItemRow>
                  <ItemRow $selected>
                    <td>
                      <ItemCell>
                        <span />
                        <svg width="14" height="15" viewBox="0 0 14 15" aria-hidden>
                          <rect x="0.500" y="0.500" width="13" height="14" rx="1" fill="#eef" stroke="#4c4c98" />
                          <path d="M2 2h4v4H2zM8 3l4 1-2 3zM3 8h3v2h2v3H3zM6 6l5 6M9 8h3v3z" fill="#5c5ca8" stroke="#5c5ca8" strokeWidth="0.500" />
                        </svg>
                        <span>black_sun</span>
                      </ItemCell>
                    </td>
                  </ItemRow>
                </tbody>
              </ItemTable>
            </Items>
          </Library>
        </RightDock>
      </Shell>
    </>
  );
}
